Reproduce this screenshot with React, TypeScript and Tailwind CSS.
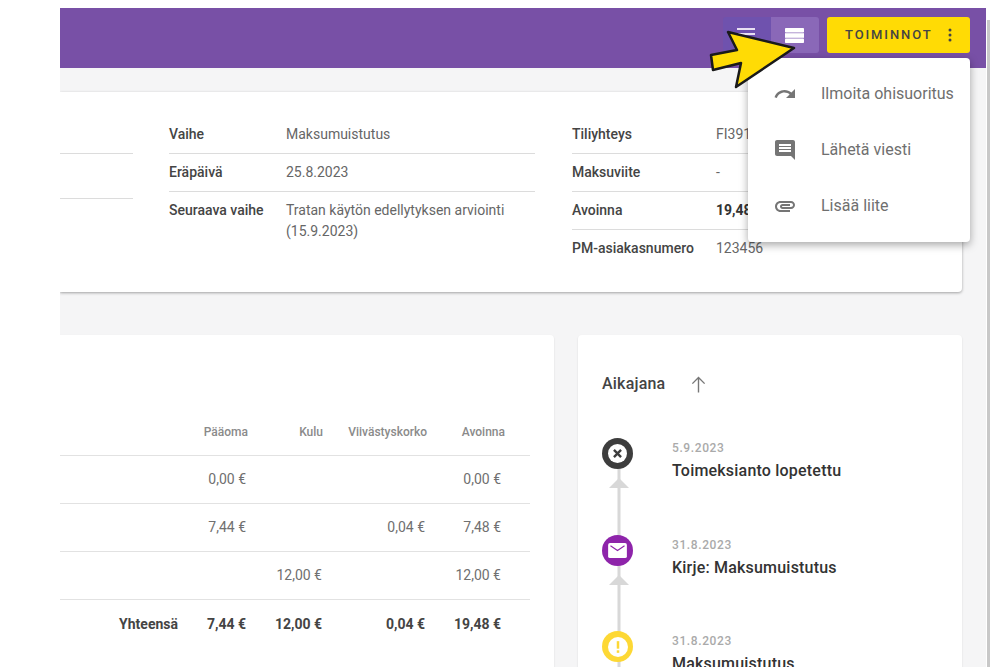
import React from "react";

const font = "font-['Roboto',sans-serif]";

function Row({ label, children, bold, last, labelW = "w-[117px]" }: { label: string; children: React.ReactNode; bold?: boolean; last?: boolean; labelW?: string }) {
  return (
    <div className={`flex h-[38px] pt-[9px] text-[14px] leading-[18px] ${last ? "" : "border-b border-[#dcdcdc]"}`}>
      <div className={`${labelW} shrink-0 font-medium text-[#444]`}>{label}</div>
      <div className={`whitespace-nowrap ${bold ? "font-bold text-[#333]" : "text-[#666]"}`}>{children}</div>
    </div>
  );
}

function Cell({ children, w, bold }: { children?: React.ReactNode; w: string; bold?: boolean }) {
  return <div className={`${w} shrink-0 text-right ${bold ? "font-bold text-[#444]" : ""}`}>{children}</div>;
}

function TableRow({ a, b, c, d, bold, label }: { a?: string; b?: string; c?: string; d?: string; bold?: boolean; label?: string }) {
  return (
    <div className={`flex h-12 items-center text-[14px] text-[#707070] ${bold ? "" : "border-b border-[#e2e2e2]"}`}>
      <Cell w="w-[118px]" bold={bold}>{label}</Cell>
      <Cell w="w-[68px]" bold={bold}>{a}</Cell>
      <Cell w="w-[76px]" bold={bold}>{b}</Cell>
      <Cell w="w-[103px]" bold={bold}>{c}</Cell>
      <Cell w="w-[76px]" bold={bold}>{d}</Cell>
    </div>
  );
}

function TimelineItem({ date, title, color, children }: { date: string; title: string; color: string; children: React.ReactNode }) {
  return (
    <div className="flex h-[96.5px] gap-[39px]">
      <div className="relative w-[31px] shrink-0">
        <div className={`relative z-10 flex h-[31px] w-[31px] items-center justify-center rounded-full ${color}`}>{children}</div>
        <svg className="absolute left-[7px] top-[30px]" width="20" height="97" viewBox="0 0 20 97">
          <rect x="8.5" y="0" width="3" height="97" fill="#d8d8d8" />
          <polygon points="10,10 20,20 0,20" fill="#d8d8d8" />
        </svg>
      </div>
      <div className="mt-[1px]">
        <div className="text-[12px] leading-[18px] font-medium tracking-[0.6px] text-[#aaa]">{date}</div>
        <div className="mt-[3px] text-[16px] leading-[22px] font-medium tracking-[0.2px] text-[#333]">{title}</div>
      </div>
    </div>
  );
}

export default function App() {
  return (
    <div className={`relative flex h-[667px] w-[1000px] overflow-hidden bg-white pl-[60px] pt-[8px] ${font}`}>
      <div className="h-[659px] w-[926px] shrink-0 overflow-hidden bg-[#f5f5f6]">
        <div className="flex h-[60px] items-start justify-end bg-[#7850a6] pr-[16px] pt-[9px]">
          <div className="flex h-[36px] overflow-hidden rounded-[3px]">
            <div className="flex w-[48px] items-center justify-center bg-[#6f52ae]">
              <svg width="20" height="16" viewBox="0 0 20 16" fill="#e8e0f2"><rect y="1" width="18" height="2" /><rect y="6" width="18" height="2" /><rect y="11" width="18" height="2" /></svg>
            </div>
            <div className="flex w-[48px] items-center justify-center bg-[#8a68b8] pr-[1px]">
              <svg width="19" height="15" viewBox="0 0 19 15" fill="#fff"><rect y="0" width="19" height="4.6" rx="0.8" /><rect y="5.2" width="19" height="4.6" /><rect y="10.4" width="19" height="4.6" rx="0.8" /></svg>
            </div>
          </div>
          <div className="ml-[8px] flex h-[36px] w-[143px] items-center rounded-[3px] bg-[#ffdb05] pl-[18px] text-[13px] font-medium tracking-[1.9px] text-[#444]">
            TOIMINNOT
            <svg className="ml-[15px]" width="4" height="14" viewBox="0 0 4 14" fill="#444"><circle cx="2" cy="2" r="1.5" /><circle cx="2" cy="7" r="1.5" /><circle cx="2" cy="12" r="1.5" /></svg>
          </div>
        </div>

        <div className="mt-[24px] mr-[24px] h-[200px] rounded-r-[4px] bg-white pt-[24px] shadow-[0_1px_3px_rgba(0,0,0,0.35)]">
          <div className="flex">
            <div className="w-[73px] shrink-0">
              <div className="h-[38px] border-b border-[#dcdcdc]" />
              <div className="h-[45px] border-b border-[#dcdcdc]" />
            </div>
            <div className="ml-[36px] w-[366px] shrink-0">
              <Row label="Vaihe">Maksumuistutus</Row>
              <Row label="Eräpäivä">25.8.2023</Row>
              <Row label="Seuraava vaihe" last>
                <div className="-mt-[1.5px] leading-[21px]">Tratan käytön edellytyksen arviointi<br />(15.9.2023)</div>
              </Row>
            </div>
            <div className="ml-[37px] w-[300px] shrink-0">
              <Row labelW="w-[144px]" label="Tiliyhteys">FI3917453000176154</Row>
              <Row labelW="w-[144px]" label="Maksuviite">-</Row>
              <Row labelW="w-[144px]" label="Avoinna" bold>19,48 €</Row>
              <Row labelW="w-[144px]" label="PM-asiakasnumero" last>123456</Row>
            </div>
          </div>
        </div>

        <div className="mt-[43px] mr-[24px] flex items-start gap-[24px]">
          <div className="h-[340px] w-[494px] shrink-0 rounded-tr-[4px] bg-white pr-[24px] pt-[72px] shadow-[0_1px_2px_rgba(0,0,0,0.12)]">
            <div className="flex h-[49px] items-center border-b border-[#e2e2e2] pt-[1px] text-[12px] font-medium text-[#8a8a8a]">
              <Cell w="w-[188px]">Pääoma</Cell>
              <Cell w="w-[75px]">Kulu</Cell>
              <Cell w="w-[104px]">Viivästyskorko</Cell>
              <Cell w="w-[78px]">Avoinna</Cell>
            </div>
            <TableRow a="0,00 €" d="0,00 €" />
            <TableRow a="7,44 €" c="0,04 €" d="7,48 €" />
            <TableRow b="12,00 €" d="12,00 €" />
            <TableRow label="Yhteensä" a="7,44 €" b="12,00 €" c="0,04 €" d="19,48 €" bold />
          </div>

          <div className="h-[340px] w-[384px] shrink-0 rounded-t-[4px] bg-white pl-[24px] pt-[38px] shadow-[0_1px_2px_rgba(0,0,0,0.12)]">
            <div className="flex items-center text-[16px] font-medium leading-[22px] tracking-[0.2px] text-[#444]">
              Aikajana
              <svg className="ml-[23px]" width="21" height="21" viewBox="0 0 24 24" fill="none" stroke="#777" strokeWidth="1.6"><path d="M12 21V4M5 11l7-7 7 7" /></svg>
            </div>
            <div className="mt-[43px]">
              <TimelineItem date="5.9.2023" title="Toimeksianto lopetettu" color="bg-[#3d3d3d]">
                <svg width="19" height="19" viewBox="0 0 24 24"><circle cx="12" cy="12" r="12" fill="#fff" /><path d="M7.5 7.5l9 9M16.5 7.5l-9 9" stroke="#3d3d3d" strokeWidth="3" /></svg>
              </TimelineItem>
              <TimelineItem date="31.8.2023" title="Kirje: Maksumuistutus" color="bg-[#8e24aa]">
                <svg width="19" height="15" viewBox="0 0 20 16"><rect x="0" y="0" width="20" height="16" rx="2" fill="#fff" /><path d="M2.5 3l7.5 5 7.5-5" fill="none" stroke="#8e24aa" strokeWidth="1.2" /></svg>
              </TimelineItem>
              <TimelineItem date="31.8.2023" title="Maksumuistutus" color="bg-[#fdd835]">
                <svg width="20" height="20" viewBox="0 0 24 24"><circle cx="12" cy="12" r="12" fill="#fff" /><rect x="10.5" y="5" width="3" height="9" fill="#fdd835" /><rect x="10.5" y="16" width="3" height="3" fill="#fdd835" /></svg>
              </TimelineItem>
            </div>
          </div>
        </div>
      </div>

      <div className="ml-[1px] mt-[12px] h-[647px] w-[3px] shrink-0 bg-[#c8c8c8]" />

      <div className="absolute left-[748px] top-[58px] z-20 h-[184px] w-[222px] rounded-[4px] bg-white pt-[8px] text-[16px] text-[#6f6f6f] shadow-[0_3px_8px_rgba(0,0,0,0.35)]">
        {[
          { t: "Ilmoita ohisuoritus", i: <path d="M18.4 10.6C16.55 8.99 14.15 8 11.5 8c-4.65 0-8.58 3.03-9.96 7.22L3.9 16c1.05-3.19 4.05-5.5 7.6-5.5 1.95 0 3.73.72 5.12 1.88L13 16h9V7l-3.6 3.6z" /> },
          { t: "Lähetä viesti", i: <path d="M20 2H4c-1.1 0-2 .9-2 2v12c0 1.1.9 2 2 2h14l4 4V4c0-1.1-.9-2-2-2zM18 14H6v-2h12v2zm0-3H6V9h12v2zm0-3H6V6h12v2z" /> },
          { t: "Lisää liite", i: <path d="M2 12.5C2 9.46 4.46 7 7.5 7H18c2.21 0 4 1.79 4 4s-1.79 4-4 4H9.5C8.12 15 7 13.88 7 12.5S8.12 10 9.5 10H17v2H9.41c-.55 0-.55 1 0 1H18c1.1 0 2-.9 2-2s-.9-2-2-2H7.5C5.57 9 4 10.57 4 12.5S5.57 16 7.5 16H17v2H7.5C4.46 18 2 15.54 2 12.5z" /> },
        ].map((x) => (
          <div key={x.t} className="flex h-[56px] items-center pl-[25px]">
            <svg width="24" height="24" viewBox="0 0 24 24" fill="#757575">{x.i}</svg>
            <span className="ml-[24px]">{x.t}</span>
          </div>
        ))}
      </div>

      <svg className="absolute left-[708px] top-[26px] z-30" width="102" height="66" viewBox="0 0 102 66">
        <polygon points="20,6 86,22 28,61 33,37 5,44 3,29 29,24" fill="#ffdb05" stroke="#1a1a1a" strokeWidth="2.5" strokeLinejoin="round" />
      </svg>
    </div>
  );
}
